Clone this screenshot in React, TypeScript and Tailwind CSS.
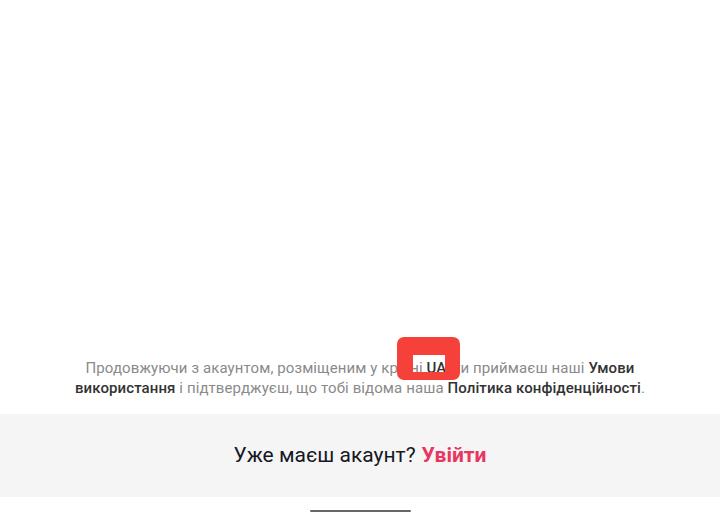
import React from "react";

export default function App() {
  return (
    <div className="relative flex h-[520px] w-[720px] flex-col bg-white font-['Roboto','Liberation_Sans',sans-serif]">
      <div className="flex-1" />

      <p className="mx-auto w-[592px] pb-[16px] text-center text-[15px] leading-[20px] tracking-[0.1px] text-[#8a8a8a]">
        Продовжуючи з акаунтом, розміщеним у країні <span className="font-medium text-[#333]">UA</span>, ти приймаєш
        наші <span className="font-medium text-[#333]">Умови використання</span> і підтверджуєш, що тобі відома наша{" "}
        <span className="font-medium text-[#333]">Політика конфіденційності</span>.
      </p>

      <div className="flex h-[83px] items-center justify-center bg-[#f5f5f5] text-[21px] text-[#161823]">
        <span>Уже маєш акаунт?</span>
        <span className="ml-[6px] font-bold text-[#e8375f]">Увійти</span>
      </div>

      <div className="flex h-[23px] items-end justify-center pb-[8px]">
        <div className="h-[2px] w-[101px] rounded-full bg-[#666]" />
      </div>

      {/* highlight marker over the country code */}
      <div className="absolute left-[397px] top-[337px] h-[43px] w-[63px] rounded-[7px] border-b-[8px] border-l-[16px] border-r-[15px] border-t-[18px] border-[#f5413a]" />
    </div>
  );
}
